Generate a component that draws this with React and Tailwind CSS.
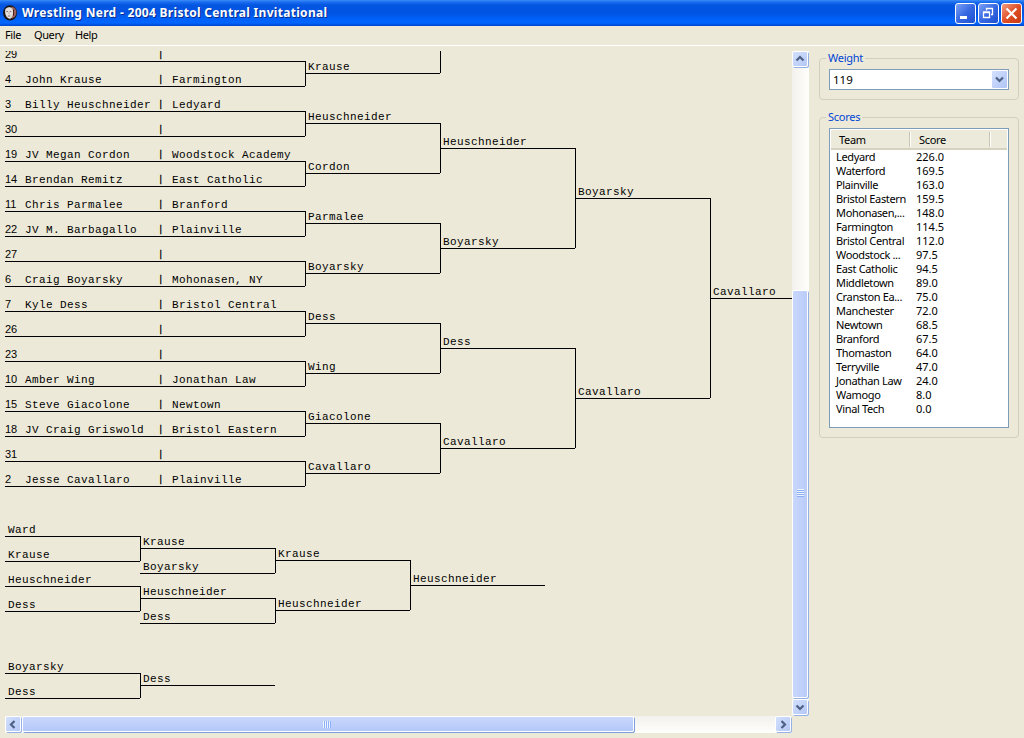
import React from "react";

const ROWS = [
  ["29", "", ""],
  ["4", "John Krause", "Farmington"],
  ["3", "Billy Heuschneider", "Ledyard"],
  ["30", "", ""],
  ["19", "JV Megan Cordon", "Woodstock Academy"],
  ["14", "Brendan Remitz", "East Catholic"],
  ["11", "Chris Parmalee", "Branford"],
  ["22", "JV M. Barbagallo", "Plainville"],
  ["27", "", ""],
  ["6", "Craig Boyarsky", "Mohonasen, NY"],
  ["7", "Kyle Dess", "Bristol Central"],
  ["26", "", ""],
  ["23", "", ""],
  ["10", "Amber Wing", "Jonathan Law"],
  ["15", "Steve Giacolone", "Newtown"],
  ["18", "JV Craig Griswold", "Bristol Eastern"],
  ["31", "", ""],
  ["2", "Jesse Cavallaro", "Plainville"],
];

// Each advancing slot: [x, line y, line width, name], in canvas coordinates.
const SLOTS = [
  [300, 22, 135, "Krause"],
  [300, 72, 135, "Heuschneider"],
  [300, 122, 135, "Cordon"],
  [300, 172, 135, "Parmalee"],
  [300, 222, 135, "Boyarsky"],
  [300, 272, 135, "Dess"],
  [300, 322, 135, "Wing"],
  [300, 372, 135, "Giacolone"],
  [300, 422, 135, "Cavallaro"],
  [435, 97, 135, "Heuschneider"],
  [435, 197, 135, "Boyarsky"],
  [435, 297, 135, "Dess"],
  [435, 397, 135, "Cavallaro"],
  [570, 147, 135, "Boyarsky"],
  [570, 347, 135, "Cavallaro"],
  [705, 247, 82, "Cavallaro"],
  [0, 485, 135, "Ward"],
  [0, 510, 135, "Krause"],
  [0, 535, 135, "Heuschneider"],
  [0, 560, 135, "Dess"],
  [135, 497, 135, "Krause"],
  [135, 522, 135, "Boyarsky"],
  [135, 547, 135, "Heuschneider"],
  [135, 572, 135, "Dess"],
  [270, 509, 135, "Krause"],
  [270, 559, 135, "Heuschneider"],
  [405, 534, 135, "Heuschneider"],
  [0, 622, 135, "Boyarsky"],
  [0, 647, 135, "Dess"],
  [135, 634, 135, "Dess"],
];

// Vertical connectors: [x, y1, y2].
const JOINS = [
  ...[10, 60, 110, 160, 210, 260, 310, 360, 410].map((y) => [300, y, y + 25]),
  [435, 0, 22],
  [435, 72, 122],
  [435, 172, 222],
  [435, 272, 322],
  [435, 372, 422],
  [570, 97, 197],
  [570, 297, 397],
  [705, 147, 347],
  [135, 485, 510],
  [135, 535, 560],
  [270, 497, 522],
  [270, 547, 572],
  [405, 509, 559],
  [135, 622, 647],
];

const SCORES = [
  ["Ledyard", "226.0"],
  ["Waterford", "169.5"],
  ["Plainville", "163.0"],
  ["Bristol Eastern", "159.5"],
  ["Mohonasen,...", "148.0"],
  ["Farmington", "114.5"],
  ["Bristol Central", "112.0"],
  ["Woodstock ...", "97.5"],
  ["East Catholic", "94.5"],
  ["Middletown", "89.0"],
  ["Cranston Ea...", "75.0"],
  ["Manchester", "72.0"],
  ["Newtown", "68.5"],
  ["Branford", "67.5"],
  ["Thomaston", "64.0"],
  ["Terryville", "47.0"],
  ["Jonathan Law", "24.0"],
  ["Wamogo", "8.0"],
  ["Vinal Tech", "0.0"],
];

function AppIcon() {
  return (
    <svg width="16" height="16" viewBox="0 0 16 16">
      <ellipse cx="8" cy="7.800" rx="7" ry="7.600" fill="#1b1514" />
      <path d="M9.500 1.500c4 .8 5.300 4 4.800 7-.4 2.500-2 4.500-4.300 5z" fill="#98605a" />
      <path d="M11.500 4.500v6" stroke="#4a1a18" strokeWidth="1" />
      <path d="M3.500 4C5 1.800 8.800 1.600 10.300 3.500c1.200 2 1 6-.2 8.500-.8 1.800-2.800 2.400-4.200 1C3.200 11.200 2.500 6.500 3.500 4z" fill="#e4dfdc" />
      <path d="M4.300 6.500h1.700M7.700 6.500h1.600M5.800 11h2.500" stroke="#8d7572" strokeWidth="1" />
      <path d="M7 7v2.200" stroke="#b9a5a0" strokeWidth=".8" />
    </svg>
  );
}

function CaptionButton({ close, children }) {
  return (
    <div
      className={
        "flex h-[21px] w-[21px] items-center justify-center rounded-[3px] border border-white " +
        (close
          ? "bg-linear-to-br from-[#f09a80] via-[#e04f26] to-[#c63a12]"
          : "bg-linear-to-br from-[#7ba0f5] via-[#3768e2] to-[#1c4fd2]")
      }
    >
      <svg width="19" height="19" viewBox="0 0 19 19" fill="none" stroke="#fff">
        {children}
      </svg>
    </div>
  );
}

const ARROWS = {
  up: "M4 8.500L7.500 5L11 8.500",
  down: "M4 5.500L7.500 9L11 5.500",
  left: "M9 4L5.500 7.500L9 11",
  right: "M6 4L9.500 7.500L6 11",
};

function ScrollButton({ dir }) {
  return (
    <div className="flex h-4 w-4 shrink-0 items-center justify-center rounded-[2px] border border-white bg-linear-to-br from-[#d3e0fd] to-[#b4c8f6] shadow-[1px_1px_0_#94b0e6]">
      <svg width="14" height="14" viewBox="0.500 0 14 14" fill="none" stroke="#4d6185" strokeWidth="2.200">
        <path d={ARROWS[dir]} />
      </svg>
    </div>
  );
}

function GroupBox({ title, className, children }) {
  return (
    <fieldset className={"w-[200px] rounded-[4px] border border-[#d0d0bf] px-[9px] " + className}>
      <legend className="-ml-[3px] h-[14px] px-[2px] text-[11px] leading-[14px] tracking-[-0.25px] text-[#0046d5]">
        {title}
      </legend>
      {children}
    </fieldset>
  );
}

function Bracket() {
  return (
    <div className="relative h-[665px] w-[787px] overflow-hidden font-['Liberation_Mono','Courier_New',monospace] text-[11px] leading-[14px] tracking-[0.4px] whitespace-pre text-black">
      <svg width="787" height="665" shapeRendering="crispEdges" stroke="#000" strokeWidth="1">
        {ROWS.map((r, i) => (
          <path key={r[0]} d={`M0 ${10.5 + i * 25}H300`} />
        ))}
        {SLOTS.map(([x, y, w], i) => (
          <path key={i} d={`M${x} ${y + 0.5}h${w}`} />
        ))}
        {JOINS.map(([x, a, b], i) => (
          <path key={i} d={`M${x + 0.5} ${a}V${b}`} />
        ))}
      </svg>
      {ROWS.map(([seed, name, team], i) => (
        <div key={seed} className="absolute left-0 flex h-[14px]" style={{ top: i * 25 - 4 }}>
          <span className="w-5 font-['Liberation_Sans',sans-serif] tracking-normal">{seed}</span>
          <span className="w-[133px] pt-px">{name}</span>
          <span className="w-[14px] pt-px text-[9px] [-webkit-text-stroke:0.3px_#000]">|</span>
          <span className="pt-px">{team}</span>
        </div>
      ))}
      {SLOTS.map(([x, y, , name], i) => (
        <span key={i} className="absolute" style={{ left: x + 3, top: y - 13 }}>
          {name}
        </span>
      ))}
    </div>
  );
}

export default function App() {
  return (
    <div className="flex h-[738px] w-[1024px] flex-col overflow-hidden bg-[#ece9d8] font-['Noto_Sans',Tahoma,sans-serif] text-[11px] text-black">
      <header className="flex h-[26px] shrink-0 items-center bg-[linear-gradient(180deg,#3c8cf8_0%,#1a6cf0_8%,#0455e0_20%,#0054e3_50%,#0062fb_75%,#0065ff_88%,#0045cc_100%)] pr-[2px] pl-[2px]">
        <AppIcon />
        <h1 className="ml-[4px] flex-1 text-[12px] leading-[26px] font-bold tracking-[0.3px] whitespace-nowrap text-white [text-shadow:1px_1px_0_#0a2c8c]">
          Wrestling Nerd - 2004 Bristol Central Invitational
        </h1>
        <div className="flex gap-[2px]">
          <CaptionButton>
            <path d="M4 13.500h7" strokeWidth="3" />
          </CaptionButton>
          <CaptionButton>
            <path d="M4.500 8.500h6v5h-6zM4 8h7M7.500 6.500V4.500h6v6H12M7 4.500h7" strokeWidth="1.300" />
          </CaptionButton>
          <CaptionButton close>
            <path d="M4.500 4.500l10 10M14.500 4.500l-10 10" strokeWidth="2.200" />
          </CaptionButton>
        </div>
      </header>
      <nav className="flex h-5 shrink-0 border-b border-white pl-[5px] leading-[18px] tracking-[-0.4px]">
        <span className="w-[29px]">File</span>
        <span className="w-[41px]">Query</span>
        <span>Help</span>
      </nav>

      <div className="flex pt-[5px]">
        <div className="flex w-[809px] shrink-0 flex-col pl-[5px]">
          <div className="flex">
            <Bracket />
            <div className="flex h-[665px] w-[17px] flex-col bg-linear-to-r from-[#f3f1ec] to-[#fefefb]">
              <ScrollButton dir="up" />
              <div className="h-[223px]" />
              <div className="mr-px flex h-[408px] flex-col items-center justify-center gap-px rounded-[2px] border border-white bg-linear-to-r from-[#c9d7fc] to-[#b9cbf8] pb-[3px] shadow-[1px_1px_0_#94b0e6]">
                {[0, 1, 2, 3].map((i) => (
                  <div key={i} className="h-px w-[7px] bg-[#eef4fe] shadow-[0_1px_0_#8cb0f8]" />
                ))}
              </div>
              <div className="mt-[1px]">
                <ScrollButton dir="down" />
              </div>
            </div>
          </div>
          <div className="flex h-[17px] w-[787px] bg-linear-to-b from-[#f3f1ec] to-[#fefefb] pr-px">
            <ScrollButton dir="left" />
            <div className="mb-px ml-[1px] flex w-[612px] items-center justify-center gap-px rounded-[2px] border border-white bg-linear-to-b from-[#c9d7fc] to-[#b4c8f8] pr-[3px] shadow-[1px_1px_0_#7f9fdc]">
              {[0, 1, 2, 3].map((i) => (
                <div key={i} className="h-[7px] w-px bg-[#eef4fe] shadow-[1px_0_0_#8cb0f8]" />
              ))}
            </div>
            <div className="flex-1" />
            <ScrollButton dir="right" />
          </div>
        </div>

        <aside className="flex flex-col gap-[10px] pl-[10px]">
          <GroupBox title="Weight" className="h-[49px] pt-1">
            <div className="flex h-[21px] w-[180px] items-center justify-between border border-[#7f9db9] bg-white pr-px pl-[3px]">
              <span className="text-[11.5px]">119</span>
              <div className="flex h-[17px] w-[15px] items-center justify-center rounded-[1px] bg-linear-to-br from-[#d3e0fd] to-[#b0c5f6]">
                <svg width="15" height="15" viewBox="0 0 15 15" fill="none" stroke="#4d6185" strokeWidth="2.200">
                  <path d={ARROWS.down} />
                </svg>
              </div>
            </div>
          </GroupBox>
          <GroupBox title="Scores" className="h-[328px] pt-1">
            <div className="h-[300px] w-[180px] border border-[#7f9db9] bg-white p-px">
              <div className="flex h-5 items-center border-b-2 border-[#d6d2c2] bg-[#ebeadb] leading-[18px] tracking-[-0.3px]">
                <span className="w-[79px] border-r border-[#c7c5b2] pl-[8px] leading-[15px]">Team</span>
                <span className="w-[80px] border-r border-l border-r-[#c7c5b2] border-l-white pl-[8px] leading-[15px]">Score</span>
                <span className="h-[15px] border-l border-white" />
              </div>
              {SCORES.map(([team, score]) => (
                <div key={team} className="flex h-[14px] pl-[5px] leading-[14px] whitespace-nowrap">
                  <span className="w-20 tracking-[-0.35px]">{team}</span>
                  <span>{score}</span>
                </div>
              ))}
            </div>
          </GroupBox>
        </aside>
      </div>
    </div>
  );
}
